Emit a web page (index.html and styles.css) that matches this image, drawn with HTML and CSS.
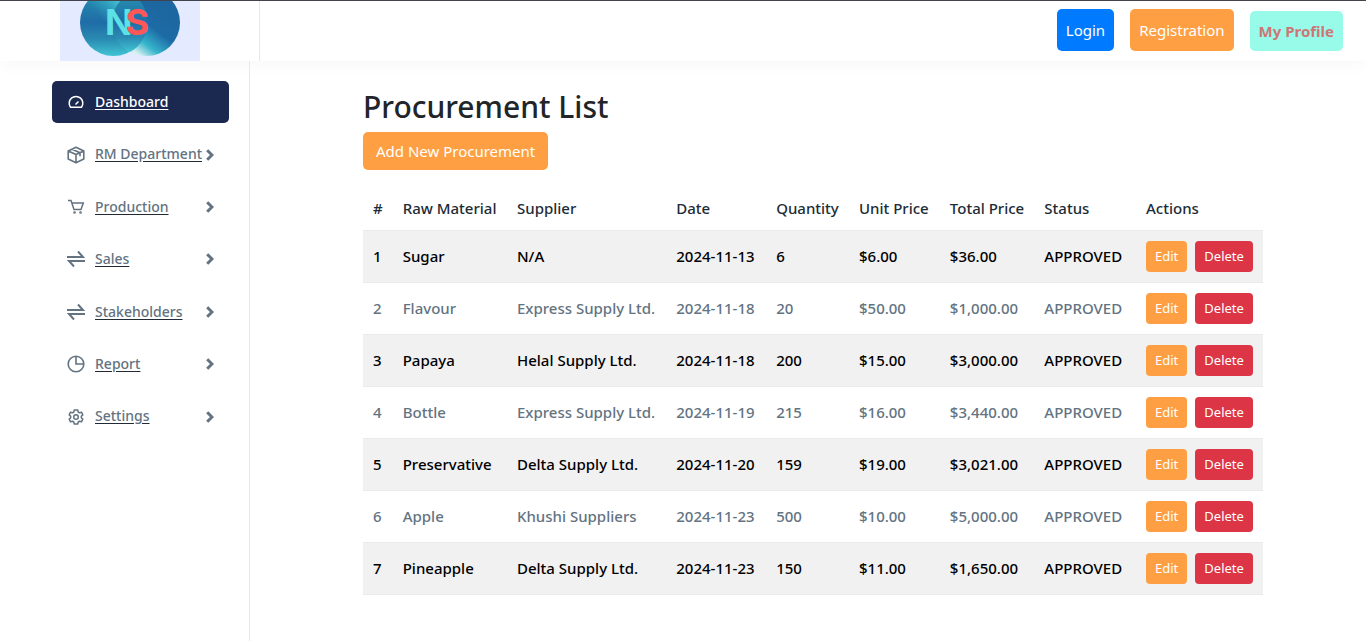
FILE: index.html
```
<!DOCTYPE html>
<html lang="en">
<head>
<meta charset="utf-8">
<meta name="viewport" content="width=device-width, initial-scale=1">
<title>Procurement List</title>
<link rel="stylesheet" href="styles.css">
</head>
<body>
<svg class="sprite" aria-hidden="true">
  <symbol id="arrow" viewBox="0 0 8 12"><path d="M1.200 1.200 6 6 1.200 10.800" fill="none" stroke="currentColor" stroke-width="3"/></symbol>
  <symbol id="swap" viewBox="0 0 18 18"><path d="M0 7h16L11 1.500M18 11H2L7 16.500" fill="none" stroke="currentColor" stroke-width="2"/></symbol>
</svg>
<header class="topbar">
  <a class="brand" href="#" aria-label="NS home">
    <svg class="logo" viewBox="0 0 140 60">
      <defs>
        <linearGradient id="left" x1="0" y1="0" x2="0" y2="1"><stop offset=".15" stop-color="#2488ad"/><stop offset=".5" stop-color="#1f6ca6"/><stop offset=".75" stop-color="#2a8bb2"/><stop offset="1" stop-color="#40c4d4"/></linearGradient>
        <linearGradient id="right" gradientUnits="userSpaceOnUse" x1="104" y1="10" x2="74" y2="50"><stop offset="0" stop-color="#1d67a0"/><stop offset=".4" stop-color="#1d6ba6"/><stop offset=".75" stop-color="#35b5cb"/><stop offset="1" stop-color="#d6eff0"/></linearGradient>
        <linearGradient id="glow" gradientUnits="userSpaceOnUse" x1="40" y1="16" x2="62" y2="-4"><stop offset="0" stop-color="#35b5cb" stop-opacity="0"/><stop offset="1" stop-color="#4fd0dc"/></linearGradient>
      </defs>
      <rect width="140" height="60" fill="#e4eaff"/>
      <circle cx="53.500" cy="21.500" r="33.500" fill="url(#left)"/>
      <path d="M20.500 16A33.500 33.500 0 0 1 70-8Q54 4 53 21z" fill="url(#glow)"/>
      <circle cx="86.500" cy="21.500" r="33.500" fill="url(#right)"/>
      <path d="M70-8a33.500 33.500 0 0 1 0 59 33.500 33.500 0 0 1 0-59z" fill="url(#left)"/>
      <text class="logo-text" x="45" y="34"><tspan class="logo-n">N</tspan><tspan class="logo-s" dx="-7">S</tspan></text>
    </svg>
  </a>
  <nav class="account" aria-label="Account">
    <a class="pill pill-blue" href="#">Login</a>
    <a class="pill pill-orange" href="#">Registration</a>
    <a class="pill pill-mint" href="#">My Profile</a>
  </nav>
</header>
<div class="shell">
  <nav class="sidebar" aria-label="Main">
    <a class="item active" href="#"><svg class="icon" viewBox="0 0 18 18" fill="none" stroke="currentColor" stroke-width="1.500"><path d="M3.500 14.200a6.800 6.800 0 1 1 11 0zM8.500 11.500l3-3"/></svg><span class="label">Dashboard</span></a>
    <a class="item" href="#"><svg class="icon" viewBox="0 0 18 18" fill="none" stroke="currentColor" stroke-width="1.600" stroke-linejoin="round"><path d="M9 1.200 16.800 5v8L9 16.800 1.200 13V5zM1.200 5 9 8.500 16.800 5M9 8.500v8.300M5 3.200l8 3.600v3.500"/></svg><span class="label">RM Department</span><svg class="arrow"><use href="#arrow"/></svg></a>
    <a class="item" href="#"><svg class="icon" viewBox="0 0 18 18" fill="none" stroke="currentColor" stroke-width="1.500"><path d="M1 2.500h3l3 9h7L16.300 5H5"/><circle cx="7.500" cy="14.500" r=".6"/><circle cx="13.500" cy="14.500" r=".6"/></svg><span class="label">Production</span><svg class="arrow"><use href="#arrow"/></svg></a>
    <a class="item" href="#"><svg class="icon"><use href="#swap"/></svg><span class="label">Sales</span><svg class="arrow"><use href="#arrow"/></svg></a>
    <a class="item" href="#"><svg class="icon"><use href="#swap"/></svg><span class="label">Stakeholders</span><svg class="arrow"><use href="#arrow"/></svg></a>
    <a class="item" href="#"><svg class="icon" viewBox="0 0 18 18" fill="none" stroke="currentColor" stroke-width="1.600"><circle cx="9" cy="9" r="7.800"/><path d="M9 1.300V9h7.700"/></svg><span class="label">Report</span><svg class="arrow"><use href="#arrow"/></svg></a>
    <a class="item" href="#"><svg class="icon" viewBox="0 0 18 18" fill="none" stroke="currentColor" stroke-width="1.500" stroke-linejoin="round"><path d="M7.300 2h3.400l.5 2 1.300.8 2-.6 1.300 2.700L14.300 8.300v1.400l1.500 1.400-1.300 2.700-2-.6-1.300.8-.5 2H7.300l-.5-2-1.300-.8-2 .6-1.300-2.700L3.700 9.700V8.300L2.200 6.900l1.300-2.700 2 .6L6.800 4z"/><circle cx="9" cy="9" r="2.300"/></svg><span class="label">Settings</span><svg class="arrow"><use href="#arrow"/></svg></a>
  </nav>
  <main class="content">
    <div class="container">
      <h1 class="title">Procurement List</h1>
      <button class="btn btn-orange" type="button">Add New Procurement</button>
      <table class="table">
        <colgroup><col class="c-num"><col class="c-material"><col class="c-supplier"><col class="c-date"><col class="c-qty"><col class="c-unit"><col class="c-total"><col class="c-status"><col></colgroup>
        <thead><tr><th scope="col">#</th><th scope="col">Raw Material</th><th scope="col">Supplier</th><th scope="col">Date</th><th scope="col">Quantity</th><th scope="col">Unit Price</th><th scope="col">Total Price</th><th scope="col">Status</th><th scope="col">Actions</th></tr></thead>
        <tbody>
          <tr><td>1</td><td>Sugar</td><td>N/A</td><td>2024-11-13</td><td>6</td><td>$6.00</td><td>$36.00</td><td>APPROVED</td><td><div class="actions"><button class="btn-sm btn-orange" type="button">Edit</button><button class="btn-sm btn-red" type="button">Delete</button></div></td></tr>
          <tr><td>2</td><td>Flavour</td><td>Express Supply Ltd.</td><td>2024-11-18</td><td>20</td><td>$50.00</td><td>$1,000.00</td><td>APPROVED</td><td><div class="actions"><button class="btn-sm btn-orange" type="button">Edit</button><button class="btn-sm btn-red" type="button">Delete</button></div></td></tr>
          <tr><td>3</td><td>Papaya</td><td>Helal Supply Ltd.</td><td>2024-11-18</td><td>200</td><td>$15.00</td><td>$3,000.00</td><td>APPROVED</td><td><div class="actions"><button class="btn-sm btn-orange" type="button">Edit</button><button class="btn-sm btn-red" type="button">Delete</button></div></td></tr>
          <tr><td>4</td><td>Bottle</td><td>Express Supply Ltd.</td><td>2024-11-19</td><td>215</td><td>$16.00</td><td>$3,440.00</td><td>APPROVED</td><td><div class="actions"><button class="btn-sm btn-orange" type="button">Edit</button><button class="btn-sm btn-red" type="button">Delete</button></div></td></tr>
          <tr><td>5</td><td>Preservative</td><td>Delta Supply Ltd.</td><td>2024-11-20</td><td>159</td><td>$19.00</td><td>$3,021.00</td><td>APPROVED</td><td><div class="actions"><button class="btn-sm btn-orange" type="button">Edit</button><button class="btn-sm btn-red" type="button">Delete</button></div></td></tr>
          <tr><td>6</td><td>Apple</td><td>Khushi Suppliers</td><td>2024-11-23</td><td>500</td><td>$10.00</td><td>$5,000.00</td><td>APPROVED</td><td><div class="actions"><button class="btn-sm btn-orange" type="button">Edit</button><button class="btn-sm btn-red" type="button">Delete</button></div></td></tr>
          <tr><td>7</td><td>Pineapple</td><td>Delta Supply Ltd.</td><td>2024-11-23</td><td>150</td><td>$11.00</td><td>$1,650.00</td><td>APPROVED</td><td><div class="actions"><button class="btn-sm btn-orange" type="button">Edit</button><button class="btn-sm btn-red" type="button">Delete</button></div></td></tr>
        </tbody>
      </table>
    </div>
  </main>
</div>
</body>
</html>
```
FILE: styles.css
```
* { box-sizing: border-box; }
body { margin: 0; min-height: 100vh; display: flex; flex-direction: column; background: #fff; color: #212529; font-family: "Noto Sans", "Open Sans", sans-serif; font-size: 15px; line-height: 1.5; }
button { font-family: inherit; border: 0; cursor: pointer; }
a { text-decoration: none; }
.sprite { display: none; }

.topbar { display: flex; justify-content: space-between; border-top: 1px solid #43434d; box-shadow: 0 4px 16px rgba(0, 0, 0, .03); }
.brand { display: flex; width: 260px; height: 60px; padding-left: 60px; border-right: 1px solid #e8e8ea; }
.logo { width: 140px; height: 60px; }
.logo-text { font-family: Inter, sans-serif; font-size: 36px; font-weight: 700; }
.logo-n { fill: #5ce1e6; }
.logo-s { fill: #ff5757; }
.account { display: flex; align-items: flex-end; gap: 16px; padding: 0 23px 10px 0; }
.pill { padding: 9px; border-radius: 5px; line-height: 24px; color: #fff; }
.pill-blue { background: #007bff; }
.pill-orange, .btn-orange { background: #ff9f43; color: #fff; }
.pill-mint { padding: 8px 9px; background: #98fbe9; color: #cd7676; font-weight: 700; }

.shell { display: flex; flex: 1; }
.sidebar { display: flex; flex-direction: column; gap: 10px; width: 250px; padding: 20px 20px 20px 52px; border-right: 1px solid #e8e8ea; }
.item { display: flex; align-items: center; padding: 10px 15px; border-radius: 5px; color: #637381; font-size: 14px; font-weight: 500; line-height: 1.6; }
.active { background: #1b2850; color: #fff; }
.icon { flex: none; width: 18px; height: 18px; margin-right: 10px; }
.label { flex: 1; min-width: 0; white-space: nowrap; text-decoration: underline; text-decoration-color: #212b36; text-underline-offset: 2px; }
.active .label { text-decoration-color: #fff; }
.arrow { flex: none; width: 8px; height: 12px; }

.content { flex: 1; padding: 26px 20px 20px 30px; }
.container { max-width: 900px; margin: 0 auto; }
.title { margin: 0 0 5px; font-size: 30px; font-weight: 500; line-height: 40px; }
.btn { display: block; padding: 7px 13px; border-radius: 5px; font-size: 15px; line-height: 24px; }
.btn-sm { padding: 5px 9px; border-radius: 4px; font-size: 13px; line-height: 21px; }
.btn-red { background: #dc3545; color: #fff; }
.table { width: 100%; margin-top: 17px; table-layout: fixed; border-collapse: collapse; font-size: 15px; white-space: nowrap; }
.table th, .table td { padding: 10px; border-bottom: 1px solid #e9ecef; text-align: left; font-weight: 500; }
.table th { line-height: 23px; color: #212b36; }
.table td { color: #637381; line-height: 31px; }
.table tbody tr:nth-child(odd) { background: #f1f1f1; }
.table tbody tr:nth-child(odd) td { color: #000; }
.actions { display: flex; gap: 8px; }
.c-num { width: 3.3%; }
.c-material { width: 12.7%; }
.c-supplier { width: 17.7%; }
.c-date { width: 11.1%; }
.c-qty { width: 9.2%; }
.c-unit { width: 10.1%; }
.c-total { width: 10.5%; }
.c-status { width: 11.3%; }
```
